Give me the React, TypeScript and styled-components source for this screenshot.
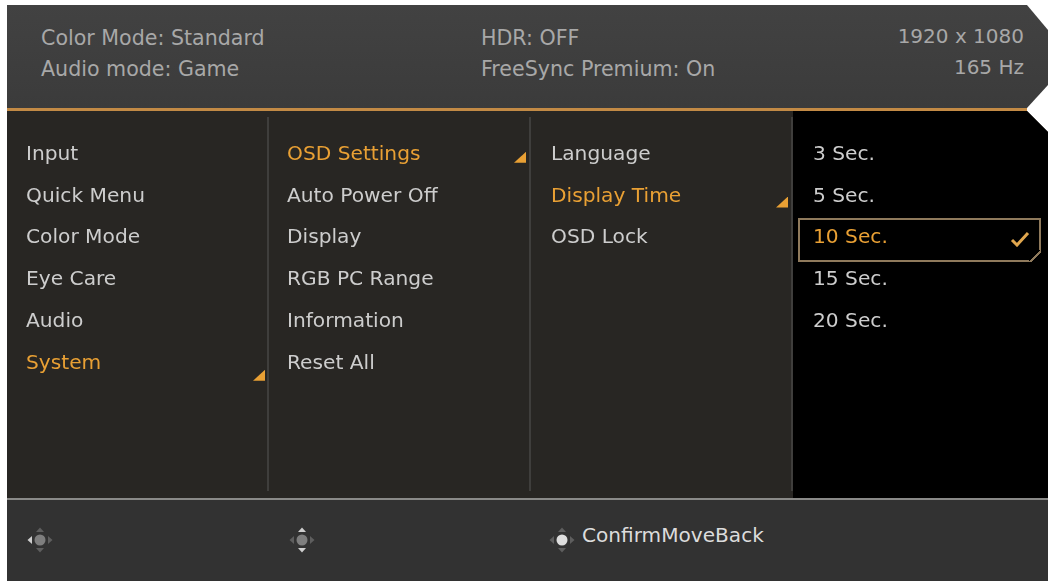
import styled, { createGlobalStyle } from "styled-components"

const GlobalStyle = createGlobalStyle`
  html, body {
    margin: 0;
    padding: 0;
    background: #fff;
  }
  body {
    font-family: "DejaVu Sans", Verdana, sans-serif;
  }
`

const Page = styled.div`
  width: 1059px;
  height: 584px;
  box-sizing: border-box;
  padding: 5px 11px 3px 7px;
  display: flex;
  flex-direction: column;
  overflow: hidden;
  filter: blur(0.35px);
`
const Header = styled.header`
  height: 103px;
  flex: none;
  box-sizing: border-box;
  padding: 18px 24px 0 34px;
  display: grid;
  grid-template-columns: 440px 1fr auto;
  background: linear-gradient(#424242, #3b3b3b);
  color: #a8a8a8;
  clip-path: polygon(0 0, 1020px 0, 100% 25px, 100% 80px, 1020px 100%, 0 100%);
`
const InfoBlock = styled.div<{ $right?: boolean }>`
  display: flex;
  flex-direction: column;
  text-align: ${(p) => (p.$right ? "right" : "left")};
  margin-top: ${(p) => (p.$right ? "-2px" : "0")};
  font-size: ${(p) => (p.$right ? "20px" : "20.6px")};
  line-height: 31px;
`
const Rule = styled.div`
  height: 3px;
  flex: none;
  margin-right: 21px;
  background: #c28a45;
`
const Panel = styled.main`
  height: 387px;
  flex: none;
  display: grid;
  grid-template-columns: 262px 262px 262px 255px;
  background: #282623;
  clip-path: polygon(0 0, 1020px 0, 100% 21px, 100% 100%, 0 100%);
`
const Column = styled.nav<{ $black?: boolean }>`
  position: relative;
  padding: 21px 0 0;
  background: ${(p) => (p.$black ? "#000" : "transparent")};
  &::after {
    content: "";
    display: ${(p) => (p.$black ? "none" : "block")};
    position: absolute;
    right: 0;
    top: 6px;
    bottom: 7px;
    width: 2px;
    background: #3f3e3c;
  }
`
const Row = styled.div<{ $active?: boolean; $inset: number }>`
  position: relative;
  height: 41.8px;
  box-sizing: border-box;
  padding-left: ${(p) => p.$inset}px;
  display: flex;
  align-items: center;
  font-size: 20.2px;
  color: ${(p) => (p.$active ? "#e9a034" : "#cdcdcd")};
`
const Marker = styled.span<{ $lift: number; $edge: number }>`
  position: absolute;
  right: ${(p) => p.$edge}px;
  bottom: ${(p) => p.$lift}px;
  width: 12px;
  height: 11px;
  background: #e9a034;
  clip-path: polygon(100% 0, 100% 100%, 0 100%);
`
const Selected = styled.div`
  position: absolute;
  left: 5px;
  right: 7px;
  top: 2.5px;
  bottom: -4.5px;
  border: 2px solid #8f7a5c;
  box-sizing: border-box;
`
const Notch = styled.span`
  position: absolute;
  right: -2px;
  bottom: -2px;
  width: 12px;
  height: 12px;
  background: linear-gradient(135deg, #000 0 46%, #8f7a5c 46% 60%, #000 60%);
`
const Check = styled.svg`
  position: absolute;
  right: 9px;
  top: 11px;
  width: 20px;
  height: 16px;
`
const Footer = styled.footer`
  flex: 1;
  border-top: 2px solid #8a8a88;
  display: grid;
  grid-template-columns: 262px 262px 1fr;
  background: #323232;
  padding-left: 19px;
  box-sizing: border-box;
`
const FooterCell = styled.div<{ $shift?: number }>`
  display: flex;
  align-items: flex-start;
  margin-left: ${(p) => p.$shift ?? 0}px;
  padding-top: 24px;
  color: #dcdcdc;
  font-size: 20.1px;
  line-height: 22px;
`
const Hint = styled.span`
  margin-left: 6px;
`

const Pad = ({ lit }: { lit: "left" | "vertical" | "center" }) => {
  const dim = "#5e5e5e"
  const bright = "#cfcfcf"
  const side = lit === "left" ? bright : dim
  const vert = lit === "vertical" ? bright : dim
  return (
    <svg width="28" height="28" viewBox="0 0 28 28" style={{ marginTop: 2 }}>
      <circle cx="14" cy="14" r="5.5" fill={lit === "center" ? "#dedede" : "#7e7e7e"} />
      <path d="M14 1.5 18 6H10Z" fill={vert} />
      <path d="M14 26.5 18 22H10Z" fill={vert} />
      <path d="M1.5 14 6 10V18Z" fill={side} />
      <path d="M26.5 14 22 10V18Z" fill={dim} />
    </svg>
  )
}

const columns = [
  { inset: 19, lift: 2, edge: 4, items: ["Input", "Quick Menu", "Color Mode", "Eye Care", "Audio", "System"], active: 5 },
  { inset: 18, lift: 11, edge: 5, items: ["OSD Settings", "Auto Power Off", "Display", "RGB PC Range", "Information", "Reset All"], active: 0 },
  { inset: 20, lift: 8, edge: 5, items: ["Language", "Display Time", "OSD Lock"], active: 1 },
]
const times = ["3 Sec.", "5 Sec.", "10 Sec.", "15 Sec.", "20 Sec."]

const App = () => {
  return (
    <Page>
      <GlobalStyle />
      <Header>
        <InfoBlock>
          <span>Color Mode: Standard</span>
          <span>Audio mode: Game</span>
        </InfoBlock>
        <InfoBlock>
          <span>HDR: OFF</span>
          <span>FreeSync Premium: On</span>
        </InfoBlock>
        <InfoBlock $right>
          <span>1920 x 1080</span>
          <span>165 Hz</span>
        </InfoBlock>
      </Header>
      <Rule />
      <Panel>
        {columns.map((col) => (
          <Column key={col.inset}>
            {col.items.map((item, i) => (
              <Row key={item} $inset={col.inset} $active={i === col.active}>
                {item}
                {i === col.active && <Marker $lift={col.lift} $edge={col.edge} />}
              </Row>
            ))}
          </Column>
        ))}
        <Column $black>
          {times.map((t, i) => (
            <Row key={t} $inset={20} $active={i === 2}>
              {i === 2 && (
                <Selected>
                  <Notch />
                  <Check viewBox="0 0 20 16">
                    <path d="M2 9 7 14 18 2" fill="none" stroke="#e0a64e" strokeWidth="3" />
                  </Check>
                </Selected>
              )}
              {t}
            </Row>
          ))}
        </Column>
      </Panel>
      <Footer>
        <FooterCell>
          <Pad lit="left" />
        </FooterCell>
        <FooterCell>
          <Pad lit="vertical" />
        </FooterCell>
        <FooterCell $shift={-2}>
          <Pad lit="center" />
          <Hint>ConfirmMoveBack</Hint>
        </FooterCell>
      </Footer>
    </Page>
  )
}

export default App
